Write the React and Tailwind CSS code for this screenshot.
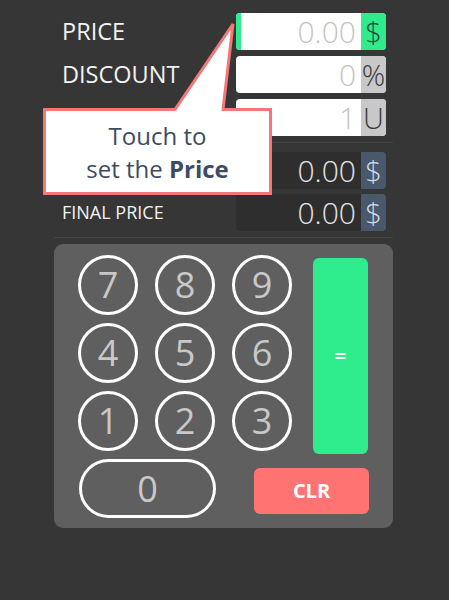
import React from 'react';

const Field = ({ value, unit, variant }) => {
    const dark = variant === 'dark';
    const active = variant === 'active';
    return (
        <div className={`w-[150px] h-[37px] rounded-[4px] flex ${dark ? 'bg-[#2e2e2e]' : 'bg-white'}`}>
            {active && <div className="w-[5px] rounded-l-[4px] bg-[#2eec8c]" />}
            <div className={`flex-1 flex items-center justify-end pr-[5px] text-[30px] font-light leading-none ${dark ? 'text-[#e4e4e4]' : 'text-[#c4c4c4]'}`}>
                {value}
            </div>
            <div
                className={`w-[25px] rounded-r-[4px] flex items-center justify-center text-[29px] font-light leading-none ${
                    active ? 'bg-[#2eec8c] text-[#25443a]' : dark ? 'bg-[#4a586c] text-[#d6dde6]' : 'bg-[#c8c8c8] text-[#3a3a3a]'
                }`}
            >
                {unit}
            </div>
        </div>
    );
};

const Row = ({ label, small, children, className = '' }) => (
    <div className={`flex items-center justify-between pl-2 pr-[7px] ${className}`}>
        <span className={`text-[#f2f2f2] ${small ? 'text-[18px]' : 'text-[23.5px]'}`}>{label}</span>
        {children}
    </div>
);

const Digit = ({ n }) => (
    <button className="w-[60px] h-[60px] rounded-full border-[3px] border-white flex items-center justify-center text-[36px] font-medium text-[#c8c8c8] leading-none">
        {n}
    </button>
);

export default function App() {
    return (
        <div className="w-[449px] h-[600px] bg-[#363636] relative overflow-hidden font-['Open_Sans',sans-serif]">
            <div className="ml-[54px] w-[339px] pt-[13px]">
                <Row label="PRICE">
                    <Field value="0.00" unit="$" variant="active" />
                </Row>
                <Row label="DISCOUNT" className="mt-[6px]">
                    <Field value="0" unit="%" />
                </Row>
                <Row label="UNITS" className="mt-[6px]">
                    <Field value="1" unit="U" />
                </Row>
                <div className="mt-[6px] h-px bg-[#444444]" />
                <Row label="SUBTOTAL" small className="mt-[9px]">
                    <Field value="0.00" unit="$" variant="dark" />
                </Row>
                <Row label="FINAL PRICE" small className="mt-[5px]">
                    <Field value="0.00" unit="$" variant="dark" />
                </Row>
                <div className="mt-[6px] h-px bg-[#444444]" />

                {/* Keypad */}
                <div className="mt-[6px] h-[284px] bg-[#5f5f5f] rounded-[9px] pt-[11px] pl-[24px]">
                    <div className="flex items-start">
                        <div className="grid grid-cols-[60px_60px_60px] gap-x-[17px] gap-y-[8px]">
                            {[7, 8, 9, 4, 5, 6, 1, 2, 3].map((n) => (
                                <Digit key={n} n={n} />
                            ))}
                        </div>
                        <button className="ml-[21px] mt-[3px] w-[55px] h-[196px] rounded-[6px] bg-[#2eec8c] text-white text-[20px] font-bold">
                            =
                        </button>
                    </div>
                    <div className="flex items-start mt-[5px]">
                        <button className="ml-px w-[137px] h-[59px] rounded-full border-[3px] border-white text-[36px] font-medium text-[#c8c8c8] leading-none">
                            0
                        </button>
                        <button className="ml-[38px] mt-[9px] w-[115px] h-[46px] rounded-[6px] bg-[#ff7373] text-white text-[20px] font-bold">
                            CLR
                        </button>
                    </div>
                </div>
            </div>

            {/* Callout */}
            <svg className="absolute left-0 top-0" width="449" height="600">
                <path
                    d="M44.5 109.5 L175 109.5 L233 24 L223 109.5 L270.5 109.5 L270.5 193.5 L44.5 193.5 Z"
                    fill="#ffffff"
                    stroke="#f47676"
                    strokeWidth="3"
                    strokeLinejoin="miter"
                />
            </svg>
            <div className="absolute left-[43px] top-[108px] w-[229px] h-[87px] flex flex-col items-center justify-center text-[24px] leading-[33px] text-[#3d4b63]">
                <span>Touch to</span>
                <span>
                    set the <b className="font-bold">Price</b>
                </span>
            </div>
        </div>
    );
}
